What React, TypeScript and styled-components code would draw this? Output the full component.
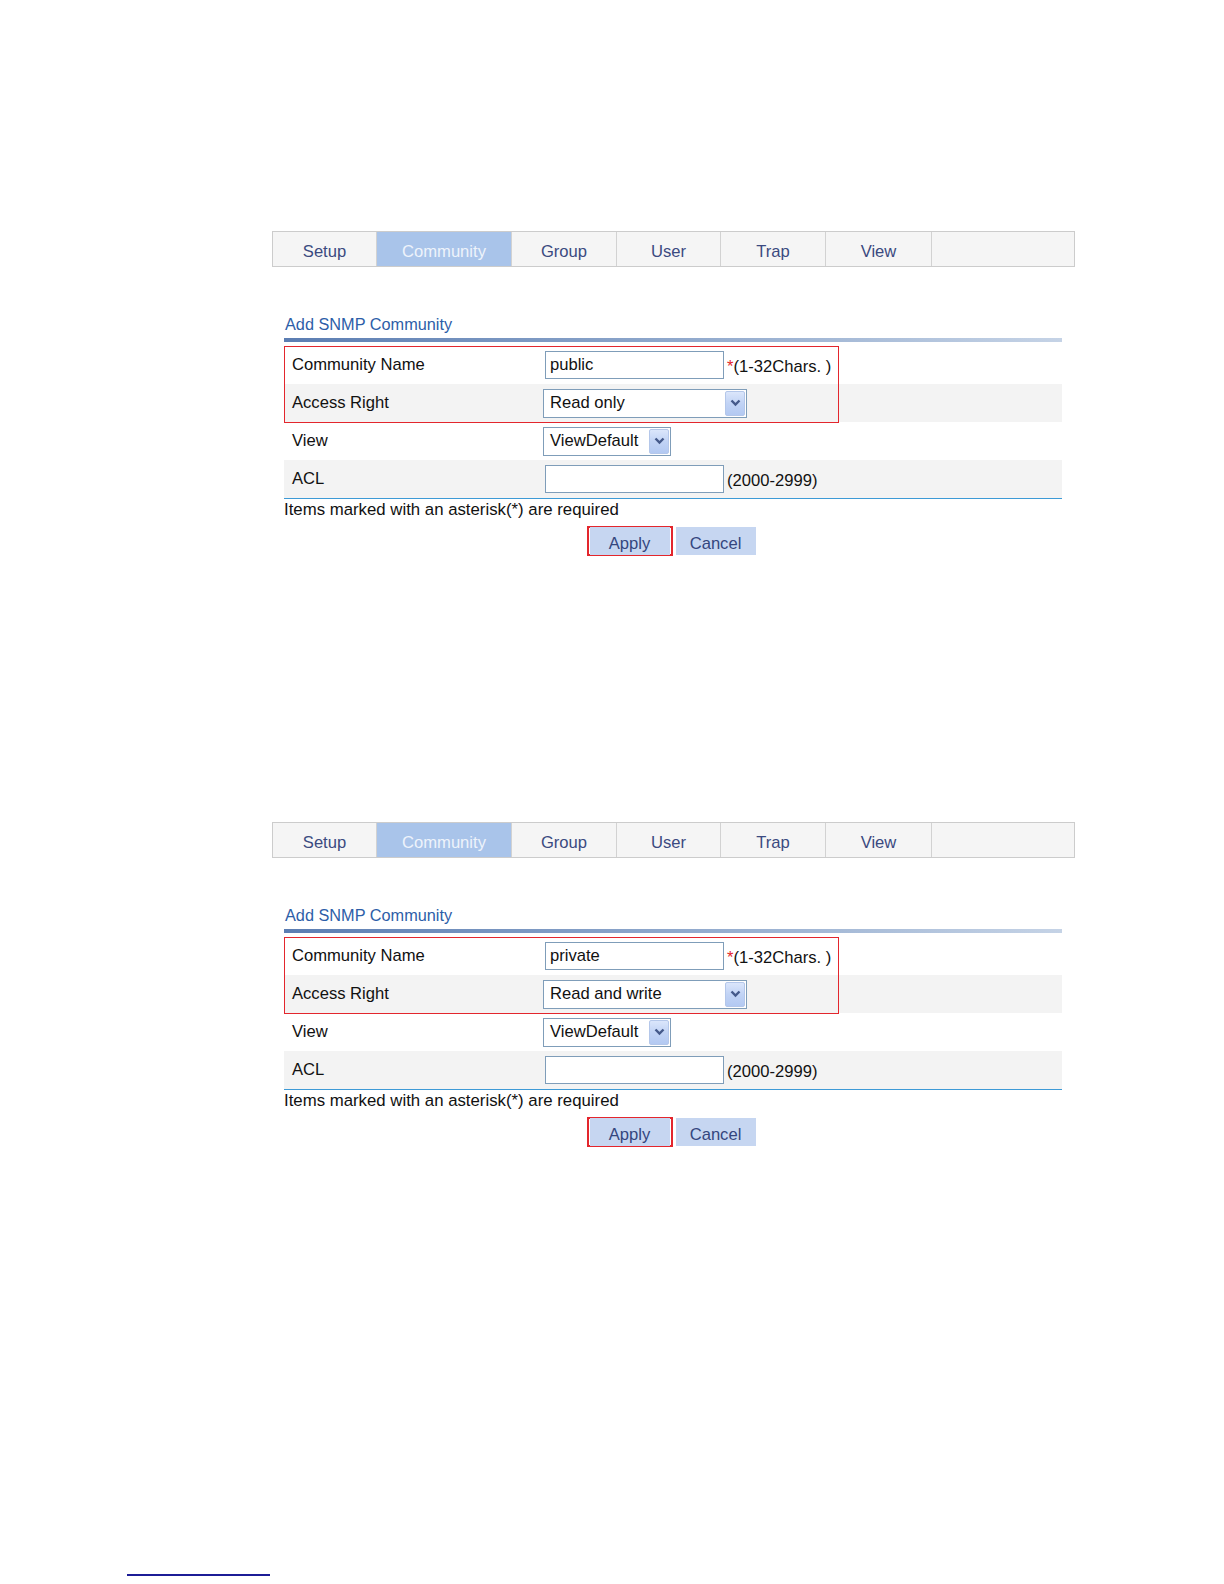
import React from "react";
import styled, { createGlobalStyle } from "styled-components";

const Global = createGlobalStyle`
  html, body { margin: 0; padding: 0; background: #ffffff; }
  body { font-family: "Liberation Sans", Arial, sans-serif; }
  * { box-sizing: border-box; }
`;

const Page = styled.div`
  width: 1224px;
  min-height: 1584px;
  padding-top: 231px;
`;

const Section = styled.section<{ $gap?: number }>`
  margin-left: 272px;
  width: 803px;
  margin-top: ${(p) => p.$gap ?? 0}px;
`;

const TabBar = styled.div`
  display: flex;
  height: 36px;
  border: 1px solid #cccccc;
  background: #f5f5f5;
`;

const Tab = styled.div<{ $w: number; $active?: boolean }>`
  width: ${(p) => p.$w}px;
  flex: ${(p) => (p.$w ? "none" : "1")};
  display: flex;
  align-items: center;
  justify-content: center;
  padding-top: 5px;
  border-right: 1px solid #d2d2d2;
  background: ${(p) => (p.$active ? "#a9c4ea" : "transparent")};
  color: ${(p) => (p.$active ? "#eef3fb" : "#3b4a80")};
  font-size: 16.6px;
  &:last-child { border-right: none; }
`;

const Form = styled.div`
  margin: 47px 0 0 12px;
  width: 778px;
`;

const Title = styled.div`
  height: 20px;
  line-height: 20px;
  font-size: 16.3px;
  color: #2d5ea8;
  padding-left: 1px;
`;

const TitleRule = styled.div`
  margin-top: 4px;
  height: 4px;
  background: linear-gradient(to right, #5b7db2 0%, #8fa8cc 50%, #c5d3e6 100%);
`;

const Rows = styled.div`
  margin-top: 4px;
  border-bottom: 1px solid #3d9ad6;
`;

const Marked = styled.div`
  position: relative;
  &::after {
    content: "";
    position: absolute;
    left: 0;
    top: 0;
    width: 553px;
    height: 75px;
    border: 1.5px solid #e3262d;
    pointer-events: none;
  }
`;

const Row = styled.div<{ $alt?: boolean }>`
  height: 38px;
  display: grid;
  grid-template-columns: 259px 1fr;
  align-items: center;
  background: ${(p) => (p.$alt ? "#f3f3f3" : "#ffffff")};
`;

const Label = styled.div`
  padding-left: 8px;
  font-size: 16.6px;
  color: #111111;
`;

const Control = styled.div`
  display: flex;
  align-items: center;
`;

const TextBox = styled.div`
  width: 179px;
  height: 28px;
  margin-left: 2px;
  border: 1px solid #7f9db9;
  background: #ffffff;
  padding-left: 4px;
  display: flex;
  align-items: center;
  font-size: 16.6px;
  color: #111111;
`;

const Hint = styled.span`
  margin-left: 3px;
  padding-top: 3px;
  font-size: 16.6px;
  color: #111111;
`;

const Star = styled.span`
  color: #e3262d;
`;

const SelectBox = styled.div<{ $w: number }>`
  width: ${(p) => p.$w}px;
  height: 29px;
  border: 1px solid #7f9db9;
  background: #ffffff;
  display: flex;
  align-items: center;
  justify-content: space-between;
  padding: 0 1px 0 6px;
  font-size: 16.6px;
  color: #111111;
`;

const DropBtn = styled.div`
  width: 20px;
  height: 25px;
  border: 1px solid #b4c7ea;
  border-radius: 2px;
  background: linear-gradient(to bottom, #dbe6fb 0%, #c1d3f5 50%, #b3c9f2 100%);
  display: flex;
  align-items: center;
  justify-content: center;
`;

const Note = styled.div`
  height: 22px;
  line-height: 22px;
  font-size: 16.8px;
  color: #111111;
`;

const Buttons = styled.div`
  margin-top: 5px;
  display: flex;
  justify-content: center;
  align-items: center;
  gap: 3px;
  padding-right: 4px;
`;

const Outline = styled.div`
  border: 2px solid #e3262d;
  padding: 0 1px;
  height: 30px;
  display: flex;
  align-items: center;
`;

const Btn = styled.div`
  width: 80px;
  height: 28px;
  background: #c6d6f1;
  color: #34467e;
  font-size: 16.6px;
  display: flex;
  align-items: center;
  justify-content: center;
  padding-top: 6px;
`;

const Footnote = styled.div`
  margin: 427px 0 0 127px;
  width: 143px;
  height: 2px;
  background: #1c1c96;
`;

const Chevron = () => (
  <svg width="11" height="8" viewBox="0 0 11 8">
    <path d="M1.5 1.5 L5.5 5.5 L9.5 1.5" fill="none" stroke="#44598a" strokeWidth="2.4" />
  </svg>
);

const tabs = [
  { name: "Setup", w: 104 },
  { name: "Community", w: 135, active: true },
  { name: "Group", w: 105 },
  { name: "User", w: 104 },
  { name: "Trap", w: 105 },
  { name: "View", w: 106 },
  { name: "", w: 0 },
];

const Block = ({ name, right, gap }: { name: string; right: string; gap?: number }) => (
  <Section $gap={gap}>
    <TabBar>
      {tabs.map((t, i) => (
        <Tab key={i} $w={t.w} $active={t.active}>
          {t.name}
        </Tab>
      ))}
    </TabBar>
    <Form>
      <Title>Add SNMP Community</Title>
      <TitleRule />
      <Rows>
        <Marked>
          <Row>
            <Label>Community Name</Label>
            <Control>
              <TextBox>{name}</TextBox>
              <Hint>
                <Star>*</Star>(1-32Chars. )
              </Hint>
            </Control>
          </Row>
          <Row $alt>
            <Label>Access Right</Label>
            <Control>
              <SelectBox $w={204}>
                <span>{right}</span>
                <DropBtn>
                  <Chevron />
                </DropBtn>
              </SelectBox>
            </Control>
          </Row>
        </Marked>
        <Row>
          <Label>View</Label>
          <Control>
            <SelectBox $w={128}>
              <span>ViewDefault</span>
              <DropBtn>
                <Chevron />
              </DropBtn>
            </SelectBox>
          </Control>
        </Row>
        <Row $alt>
          <Label>ACL</Label>
          <Control>
            <TextBox />
            <Hint>(2000-2999)</Hint>
          </Control>
        </Row>
      </Rows>
      <Note>Items marked with an asterisk(*) are required</Note>
      <Buttons>
        <Outline>
          <Btn>Apply</Btn>
        </Outline>
        <Btn>Cancel</Btn>
      </Buttons>
    </Form>
  </Section>
);

export default function App() {
  return (
    <Page>
      <Global />
      <Block name="public" right="Read only" />
      <Block name="private" right="Read and write" gap={266} />
      <Footnote />
    </Page>
  );
}
